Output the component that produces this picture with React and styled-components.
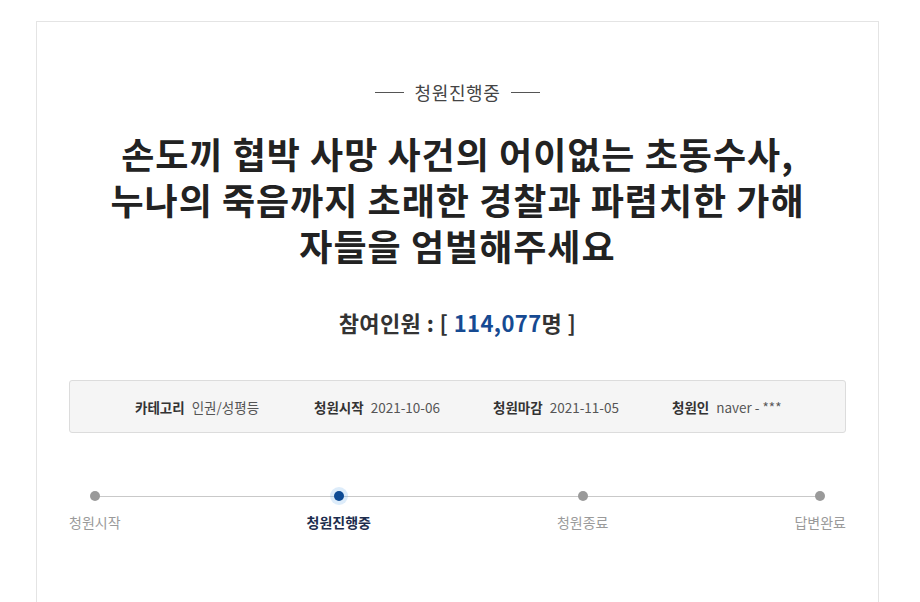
import React from 'react'
import styled, { createGlobalStyle } from 'styled-components'

const GlobalStyle = createGlobalStyle`
    html, body {
        margin: 0;
        padding: 0;
        background: #fff;
    }
    body {
        font-family: "Noto Sans CJK KR", "Noto Sans", sans-serif;
        color: #333;
    }
`

const steps = [
    { label: '청원시작' },
    { label: '청원진행중', active: true },
    { label: '청원종료' },
    { label: '답변완료' },
]

const info = [
    { label: '카테고리', value: '인권/성평등' },
    { label: '청원시작', value: '2021-10-06' },
    { label: '청원마감', value: '2021-11-05' },
    { label: '청원인', value: 'naver - ***' },
]

const titleLines = [
    '손도끼 협박 사망 사건의 어이없는 초동수사,',
    '누나의 죽음까지 초래한 경찰과 파렴치한 가해',
    '자들을 엄벌해주세요',
]

function App() {
    return (
        <>
            <GlobalStyle />
            <Page>
                <Card>
                    <Status>청원진행중</Status>
                    <Title>
                        {titleLines.map((line) => (
                            <TitleLine key={line}>{line}</TitleLine>
                        ))}
                    </Title>
                    <Count>
                        참여인원 : [ <CountNum>114,077</CountNum>명 ]
                    </Count>
                    <InfoBox>
                        {info.map((item) => (
                            <InfoItem key={item.label}>
                                <InfoLabel>{item.label}</InfoLabel>
                                <InfoValue>{item.value}</InfoValue>
                            </InfoItem>
                        ))}
                    </InfoBox>
                    <Progress>
                        <ProgressLine />
                        {steps.map((step) => (
                            <Step key={step.label}>
                                <Dot $active={step.active} />
                                <StepLabel $active={step.active}>{step.label}</StepLabel>
                            </Step>
                        ))}
                    </Progress>
                </Card>
            </Page>
        </>
    )
}

const Page = styled.div`
    padding: 21px 0 0 36px;
    height: 581px;
    overflow: hidden;
`

const Card = styled.section`
    width: 843px;
    min-height: 600px;
    box-sizing: border-box;
    border: 1px solid #e4e4e4;
    border-bottom: none;
    background: #fff;
    padding: 57px 32px 0;
    display: flex;
    flex-direction: column;
    align-items: center;
`

const Status = styled.div`
    display: flex;
    align-items: center;
    gap: 11px;
    font-size: 18px;
    line-height: 26px;
    letter-spacing: 0.6px;
    color: #444;

    &::before, &::after {
        content: '';
        width: 29px;
        height: 1px;
        background: #555;
    }
`

const Title = styled.h1`
    margin: 25px 0 0;
    display: flex;
    flex-direction: column;
    align-items: center;
    font-size: 36px;
    line-height: 46px;
    font-weight: 700;
    color: #222;
    letter-spacing: 1px;
    white-space: nowrap;
`

const TitleLine = styled.span`
    display: block;
    height: 46px;
`

const Count = styled.div`
    margin-top: 39px;
    font-size: 22px;
    line-height: 30px;
    font-weight: 700;
    letter-spacing: 0.4px;
    color: #333;
`

const CountNum = styled.span`
    color: #164a92;
`

const InfoBox = styled.div`
    margin-top: 43px;
    align-self: stretch;
    height: 53px;
    box-sizing: border-box;
    background: #f5f5f5;
    border: 1px solid #dcdcdc;
    border-radius: 3px;
    display: grid;
    grid-template-columns: repeat(4, 179px);
    align-items: center;
    padding-left: 65px;
`

const InfoItem = styled.div`
    display: flex;
    align-items: baseline;
    gap: 7px;
    font-size: 13.5px;
    white-space: nowrap;
`

const InfoLabel = styled.span`
    font-weight: 700;
    color: #333;
`

const InfoValue = styled.span`
    color: #555;
`

const Progress = styled.div`
    position: relative;
    align-self: stretch;
    margin-top: 58px;
    display: flex;
    justify-content: space-between;
`

const ProgressLine = styled.div`
    position: absolute;
    left: 26px;
    right: 26px;
    top: 5px;
    height: 1px;
    background: #c9c9c9;
`

const Step = styled.div`
    position: relative;
    display: flex;
    flex-direction: column;
    align-items: center;
`

const Dot = styled.span`
    width: 10px;
    height: 10px;
    border-radius: 50%;
    background: ${(p) => (p.$active ? '#0d4a94' : '#9a9a9a')};
    box-shadow: ${(p) => (p.$active ? '0 0 0 4px rgba(120, 180, 235, 0.25)' : 'none')};
`

const StepLabel = styled.span`
    margin-top: 11px;
    font-size: 14px;
    line-height: 20px;
    color: ${(p) => (p.$active ? '#1d2d4d' : '#9a9a9a')};
    font-weight: ${(p) => (p.$active ? 700 : 400)};
`

export default App
